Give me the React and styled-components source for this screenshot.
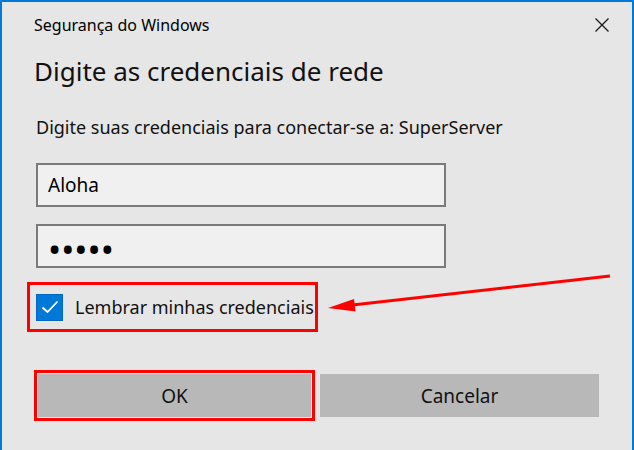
import styled, { createGlobalStyle } from "styled-components";

const GlobalStyle = createGlobalStyle`
  html, body {
    margin: 0;
    padding: 0;
    background: #e6e6e6;
  }
  * {
    box-sizing: border-box;
  }
`;

export default function App() {
  return (
    <>
      <GlobalStyle />
      <Window>
        <TitleBar>
          <span>Segurança do Windows</span>
          <CloseButton aria-label="Fechar">
            <svg width="16" height="16" viewBox="0 0 16 16">
              <path d="M1.5 1.5 L14.5 14.5 M14.5 1.5 L1.5 14.5" stroke="#1a1a1a" strokeWidth="1.3" fill="none" />
            </svg>
          </CloseButton>
        </TitleBar>
        <Heading>Digite as credenciais de rede</Heading>
        <Description>Digite suas credenciais para conectar-se a: SuperServer</Description>
        <Field defaultValue="Aloha" />
        <Field type="password" defaultValue="12345" $password />
        <CheckRow>
          <CheckBox>
            <svg width="18" height="14" viewBox="0 0 18 14">
              <path d="M1.5 7.5 L6.5 12 L16.5 1.5" stroke="#fff" strokeWidth="1.8" fill="none" />
            </svg>
          </CheckBox>
          <CheckLabel>Lembrar minhas credenciais</CheckLabel>
        </CheckRow>
        <ButtonRow>
          <Highlight>
            <Button>OK</Button>
          </Highlight>
          <Button $wide>Cancelar</Button>
        </ButtonRow>
        <Annotation width="634" height="450" viewBox="0 0 634 450">
          <line x1="610" y1="276" x2="348" y2="305.5" stroke="#ff0000" strokeWidth="3" />
          <polygon points="328,308 355.5,311.5 354,299" fill="#ff0000" />
        </Annotation>
      </Window>
    </>
  );
}

const Window = styled.div`
  position: relative;
  width: 634px;
  height: 450px;
  background: #e6e6e6;
  border: 2px solid #0078d7;
  border-bottom: none;
  padding: 0 22px 0 32px;
  font-family: "Noto Sans", "Open Sans", sans-serif;
  color: #000;
  overflow: hidden;
`;

const TitleBar = styled.div`
  display: flex;
  align-items: center;
  justify-content: space-between;
  height: 46px;
  font-size: 16px;
  color: #000;
`;

const CloseButton = styled.div`
  display: flex;
  align-items: center;
  justify-content: center;
  width: 16px;
  height: 16px;
`;

const Heading = styled.h1`
  margin: 8px 0 0;
  font-size: 26px;
  line-height: 30px;
  font-weight: 400;
  color: #111;
`;

const Description = styled.p`
  margin: 31px 0 0 2px;
  font-size: 18px;
  line-height: 20px;
  color: #111;
`;

const Field = styled.input`
  display: block;
  width: 410px;
  height: 44px;
  margin: ${(p) => (p.$password ? "17px" : "26px")} 0 0 2px;
  padding: ${(p) => (p.$password ? "4px 10px 0" : "0 10px")};
  background: #f0f0f0;
  border: 2px solid #7a7a7a;
  border-radius: 0;
  font-family: inherit;
  font-size: ${(p) => (p.$password ? "35px" : "19px")};
  line-height: ${(p) => (p.$password ? "36px" : "normal")};
  letter-spacing: ${(p) => (p.$password ? "0px" : "0")};
  color: #000;
  outline: none;
`;

const CheckRow = styled.div`
  display: flex;
  align-items: center;
  gap: 12px;
  width: 291px;
  height: 50px;
  margin: 14px 0 0 -7px;
  padding-left: 6px;
  border: 3px solid #ff0000;
`;

const CheckBox = styled.div`
  display: flex;
  align-items: center;
  justify-content: center;
  width: 27px;
  height: 27px;
  background: #0078d7;
  border: 1px solid #0067c0;
`;

const CheckLabel = styled.span`
  font-size: 18px;
  color: #111;
`;

const ButtonRow = styled.div`
  display: flex;
  align-items: center;
  gap: 5px;
  margin-top: 38px;
`;

const Highlight = styled.div`
  display: flex;
  width: 281px;
  height: 51px;
  padding: 1px;
  border: 3px solid #ff0000;
  background: #e6e6e6;
`;

const Button = styled.div`
  display: flex;
  align-items: center;
  justify-content: center;
  flex: ${(p) => (p.$wide ? "0 0 279px" : "1")};
  height: ${(p) => (p.$wide ? "43px" : "auto")};
  background: #b8b8b8;
  font-size: 19px;
  color: #111;
`;

const Annotation = styled.svg`
  position: absolute;
  left: -2px;
  top: -2px;
  pointer-events: none;
`;
